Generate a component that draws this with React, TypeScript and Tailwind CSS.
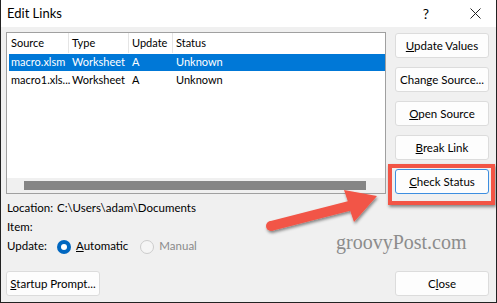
import React from 'react';

const font = { fontFamily: 'Lato, "Noto Sans", sans-serif' };

function Btn({ children, focused = false }: { children: React.ReactNode; focused?: boolean }) {
  return (
    <button
      className={
        focused
          ? 'h-[25px] w-[94px] whitespace-nowrap rounded-[3px] border border-[#3d8ee0] bg-[#fdfdfd] text-[11.5px] text-black'
          : 'h-[25px] w-[94px] whitespace-nowrap rounded-[3px] border border-[#dcdcdc] bg-[#fdfdfd] text-[11.5px] text-black'
      }
    >
      {children}
    </button>
  );
}

const rows = [
  { src: 'macro.xlsm', type: 'Worksheet', upd: 'A', status: 'Unknown', sel: true },
  { src: 'macro1.xls...', type: 'Worksheet', upd: 'A', status: 'Unknown', sel: false },
];

export default function App() {
  return (
    <div
      className="relative flex h-[303px] w-[497px] flex-col overflow-hidden border-x border-b border-[#222] bg-[#f0f0f0] text-black"
      style={font}
    >
      {/* title bar */}
      <div className="flex h-[27px] shrink-0 items-center bg-white pl-[6px]">
        <span className="text-[13px]">Edit Links</span>
        <span className="ml-auto mr-[41px] text-[14px]">?</span>
        <svg width="11" height="11" viewBox="0 0 11 11" className="mr-[15px]">
          <path d="M0.5 0.5 L10.5 10.5 M10.5 0.5 L0.5 10.5" stroke="#222" strokeWidth="1" />
        </svg>
      </div>

      <div className="flex flex-1 flex-col px-[5px] pt-[5px]">
        <div className="flex">
          {/* list view */}
          <div className="flex h-[162px] w-[380px] flex-col border border-[#a0a0a0] bg-white">
            <div className="flex h-[20px] items-center text-[11px]">
              <div className="flex h-full w-[62px] items-center border-r border-[#e5e5e5] pl-[4px]">Source</div>
              <div className="flex h-full w-[60px] items-center border-r border-[#e5e5e5] pl-[3px]">Type</div>
              <div className="flex h-full w-[44px] items-center border-r border-[#e5e5e5] pl-[3px]">Update</div>
              <div className="flex h-full items-center pl-[3px]">Status</div>
            </div>
            <div className="flex flex-col gap-[1px] pl-[2px] pt-[1px]">
              {rows.map((r) => (
                <div
                  key={r.src}
                  className={
                    r.sel
                      ? 'flex h-[17px] items-center bg-[#0078d7] text-[11px] text-white'
                      : 'flex h-[17px] items-center text-[11px]'
                  }
                >
                  <div className="w-[62px] whitespace-nowrap pl-[2px]">{r.src}</div>
                  <div className="w-[60px] pl-[1px]">{r.type}</div>
                  <div className="w-[44px] pl-[1px]">{r.upd}</div>
                  <div className="pl-[1px]">{r.status}</div>
                </div>
              ))}
            </div>
            <div className="mt-auto flex h-[15px] items-center bg-[#f0f0f0] pl-[17px]">
              <div className="h-[9px] w-[342px] bg-[#858585]" />
            </div>
          </div>

          {/* right buttons */}
          <div className="ml-[9px] flex flex-col gap-[9px] pt-[1px]">
            <Btn><u>U</u>pdate Values</Btn>
            <Btn>Chan<u>g</u>e Source...</Btn>
            <Btn><u>O</u>pen Source</Btn>
            <Btn><u>B</u>reak Link</Btn>
            <Btn focused><u>C</u>heck Status</Btn>
          </div>
        </div>

        {/* info rows */}
        <div className="mt-[4px] flex flex-col text-[11.5px]">
          <div className="flex h-[19px] items-center pl-[1px]">
            <span className="w-[50px]">Location:</span>
            <span>C:\Users\adam\Documents</span>
          </div>
          <div className="flex h-[19px] items-center pl-[1px]">Item:</div>
          <div className="flex h-[19px] items-center pl-[1px]">
            <span className="w-[50px]">Update:</span>
            <span className="mt-[2px] flex h-[14px] w-[14px] items-center justify-center rounded-full bg-[#0067c0]">
              <span className="h-[6px] w-[6px] rounded-full bg-white" />
            </span>
            <span className="ml-[5px]"><u>A</u>utomatic</span>
            <span className="ml-[12px] mt-[2px] h-[14px] w-[14px] rounded-full border border-[#cccccc] bg-[#f5f5f5]" />
            <span className="ml-[5px] text-[#8a8a8a]">Manual</span>
          </div>
        </div>

        <div className="mt-[16px] flex items-center justify-between pr-[2px]">
          <Btn><u>S</u>tartup Prompt...</Btn>
          <Btn>C<u>l</u>ose</Btn>
        </div>
      </div>

      {/* annotation: red box */}
      <div className="absolute left-[387px] top-[164px] h-[41px] w-[107px] border-[4px] border-[#f25546] shadow-[1px_2px_3px_rgba(0,0,0,0.45)]" />

      {/* annotation: arrow */}
      <svg className="absolute left-0 top-0" width="497" height="303" viewBox="0 0 497 303">
        <defs>
          <filter id="sh" x="-20%" y="-50%" width="140%" height="200%">
            <feDropShadow dx="1" dy="2" stdDeviation="1.5" floodColor="#000" floodOpacity="0.45" />
          </filter>
        </defs>
        <g filter="url(#sh)" fill="#f25546">
          <polygon points="268.8,221.2 346.8,201.2 343,190 376,196 353,222 349.2,210.8 271.2,230.8" />
          <circle cx="270" cy="226" r="5" />
        </g>
      </svg>

      {/* watermark */}
      <div
        className="absolute left-[335px] top-[227px] text-[20px] text-[#8c8c8c]"
        style={{ fontFamily: '"Liberation Serif", "DejaVu Serif", serif' }}
      >
        groovyPost.com
      </div>
    </div>
  );
}
